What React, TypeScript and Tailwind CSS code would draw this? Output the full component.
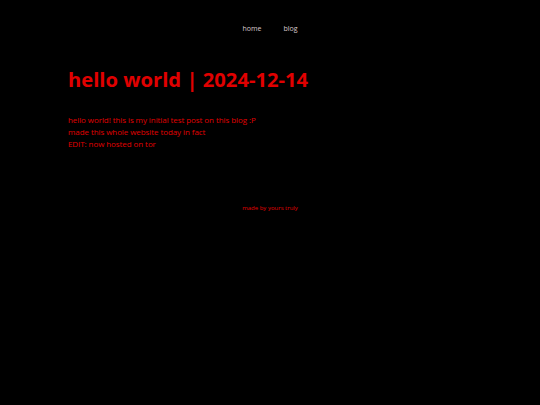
export default function App() {
  return (
    <div className="min-h-[405px] w-full bg-black font-['Open_Sans',sans-serif]">
      <nav className="flex justify-center gap-[22px] pt-[23px] text-[7px] leading-[12px] text-[#d8c8cc]">
        <a>home</a>
        <a>blog</a>
      </nav>
      <main className="px-[68px] pt-[29px]">
        <h1 className="text-[20.2px] font-bold leading-[30px] text-[#e00000]">
          hello world | 2024-12-14
        </h1>
        <div className="mt-[20px] text-[8px] leading-[12px] tracking-[-0.08px] text-[#e00000]">
          <p>hello world! this is my initial test post on this blog :P</p>
          <p>made this whole website today in fact</p>
          <p>EDIT: now hosted on tor</p>
        </div>
      </main>
      <footer className="mt-[54px] text-center text-[6px] leading-[8px] text-[#e00000]">
        made by yours truly
      </footer>
    </div>
  );
}
